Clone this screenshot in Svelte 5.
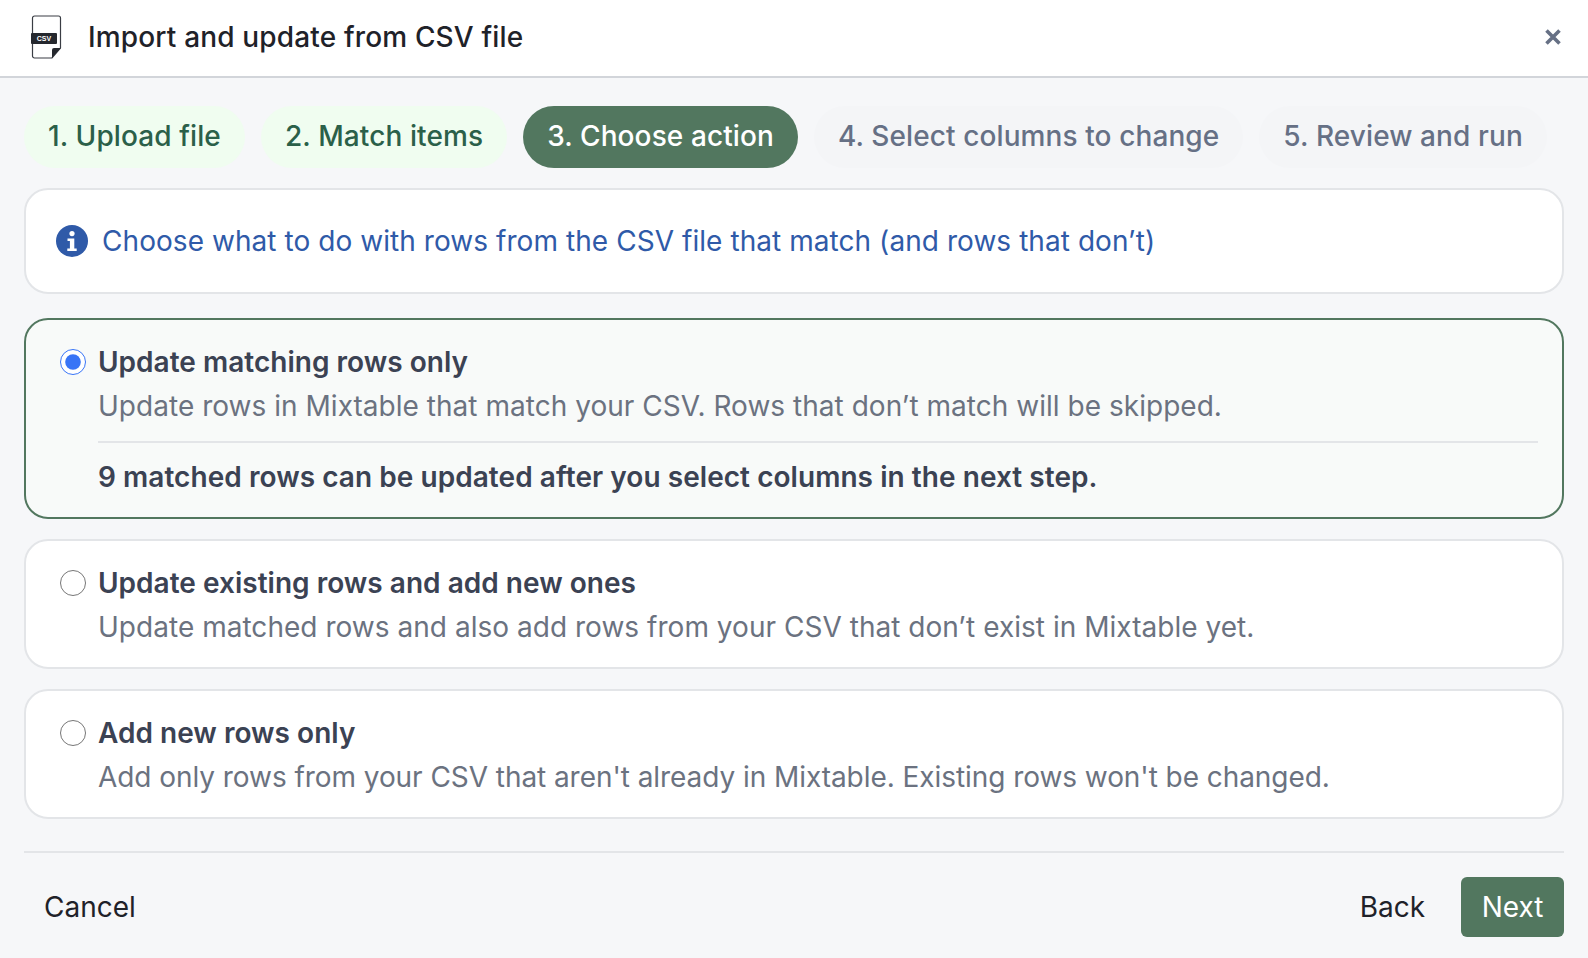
<script>
    const steps = [
        { label: "1. Upload file", state: "done" },
        { label: "2. Match items", state: "done" },
        { label: "3. Choose action", state: "active" },
        { label: "4. Select columns to change", state: "todo" },
        { label: "5. Review and run", state: "todo" }
    ];

    const options = [
        {
            title: "Update matching rows only",
            desc: "Update rows in Mixtable that match your CSV. Rows that don’t match will be skipped.",
            note: "9 matched rows can be updated after you select columns in the next step."
        },
        {
            title: "Update existing rows and add new ones",
            desc: "Update matched rows and also add rows from your CSV that don’t exist in Mixtable yet."
        },
        {
            title: "Add new rows only",
            desc: "Add only rows from your CSV that aren't already in Mixtable. Existing rows won't be changed."
        }
    ];

    let selected = 0;
</script>

<div class="dialog">
    <header class="top">
        <svg class="fileIcon" width="34" height="44" viewBox="0 0 34 44">
            <path d="M4.5 1h24a2 2 0 0 1 2 2V33L22 43H4.5a2 2 0 0 1-2-2V3a2 2 0 0 1 2-2z" fill="#fff" stroke="#3a3d44" stroke-width="1.2"/>
            <path d="M30.6 33L22 43V35a2 2 0 0 1 2-2z" fill="#25282e"/>
            <rect x="1" y="18" width="26" height="11" rx="1" fill="#25282e"/>
            <text x="14" y="26.2" class="csv">CSV</text>
        </svg>
        <h1>Import and update from CSV file</h1>
        <button class="close" aria-label="Close">
            <svg width="20" height="20" viewBox="0 0 20 20">
                <path d="M3.5 3.5l13 13M16.5 3.5l-13 13" stroke="#667085" stroke-width="3.6" fill="none"/>
            </svg>
        </button>
    </header>

    <main class="body">
        <nav class="steps">
            {#each steps as step}
                <span class="step {step.state}">{step.label}</span>
            {/each}
        </nav>

        <div class="info">
            <svg width="32" height="32" viewBox="0 0 32 32">
                <circle cx="16" cy="16" r="16" fill="#2f5aa8"/>
                <circle cx="16" cy="8.6" r="2.6" fill="#fff"/>
                <path d="M11.5 13.5h6.8v10h2.4v2.6h-9.4v-2.6h2.6v-7.4h-2.4z" fill="#fff"/>
            </svg>
            <span>Choose what to do with rows from the CSV file that match (and rows that don’t)</span>
        </div>

        <div class="options">
            {#each options as option, i}
                <label class="option" class:selected={selected === i}>
                    <input type="radio" name="action" value={i} bind:group={selected} />
                    <div class="optionText">
                        <div class="optionTitle">{option.title}</div>
                        <div class="optionDesc">{option.desc}</div>
                        {#if option.note}
                            <div class="optionNote">{option.note}</div>
                        {/if}
                    </div>
                </label>
            {/each}
        </div>

        <footer class="bottom">
            <button class="plain">Cancel</button>
            <div class="right">
                <button class="plain">Back</button>
                <button class="next">Next</button>
            </div>
        </footer>
    </main>
</div>

<style>
    :global(body) {
        margin: 0;
        background: #f6f7f9;
    }

    .dialog {
        height: 958px;
        display: flex;
        flex-direction: column;
        font-family: Inter, "Liberation Sans", sans-serif;
        color: #1f2229;
        overflow: hidden;
    }

    .top {
        height: 74px;
        flex: none;
        background: #fff;
        border-bottom: 2px solid #d2d5da;
        display: flex;
        align-items: center;
        padding: 0 25px 2px 30px;
    }

    .fileIcon {
        margin-right: 24px;
    }

    .csv {
        font-family: "Liberation Sans", sans-serif;
        font-size: 7px;
        font-weight: 700;
        fill: #fff;
        text-anchor: middle;
    }

    h1 {
        margin: 0;
        font-size: 28px;
        font-weight: 500;
        letter-spacing: 0.16px;
        flex: 1;
    }

    .close {
        border: none;
        background: none;
        padding: 0;
        height: 20px;
    }

    .body {
        flex: 1;
        padding: 28px 24px 0;
    }

    .steps {
        display: flex;
        gap: 16px;
        margin-bottom: 20px;
    }

    .step {
        height: 62px;
        padding: 0 24px 2px;
        box-sizing: border-box;
        border-radius: 31px;
        display: flex;
        align-items: center;
        font-size: 28px;
        font-weight: 500;
        letter-spacing: 0.1px;
    }

    .done {
        background: #f0fdf0;
        color: #2b6049;
    }

    .active {
        background: #52775f;
        color: #fff;
    }

    .todo {
        background: #f4f5f7;
        color: #667085;
    }

    .info {
        height: 102px;
        box-sizing: content-box;
        background: #fff;
        border: 2px solid #e3e5e8;
        border-radius: 24px;
        display: flex;
        align-items: center;
        gap: 14px;
        padding: 0 30px;
        font-size: 28px;
        letter-spacing: 0.06px;
        color: #2f5aa8;
        margin-bottom: 24px;
    }

    .options {
        display: flex;
        flex-direction: column;
        gap: 20px;
    }

    .option {
        display: flex;
        gap: 12px;
        padding: 24px 24px 22px 34px;
        background: #fff;
        border: 2px solid #e3e5e8;
        border-radius: 24px;
    }

    .option.selected {
        background: #f8faf9;
        border-color: #52775f;
    }

    input[type="radio"] {
        width: 26px;
        height: 26px;
        margin: 5px 0 0;
        flex: none;
        accent-color: #3874f6;
    }

    .optionText {
        flex: 1;
    }

    .optionTitle {
        font-size: 28px;
        line-height: 36px;
        font-weight: 600;
        letter-spacing: 0.02px;
        color: #3b4253;
    }

    .optionDesc {
        font-size: 28px;
        line-height: 36px;
        margin-top: 8px;
        letter-spacing: 0.03px;
        color: #6b7280;
    }

    .option:last-child .optionDesc {
        letter-spacing: -0.06px;
    }

    .optionNote {
        margin-top: 17px;
        padding-top: 16px;
        border-top: 2px solid #e3e5e8;
        font-size: 28px;
        line-height: 36px;
        font-weight: 600;
        letter-spacing: 0.05px;
        color: #3b4253;
    }

    .bottom {
        margin-top: 32px;
        border-top: 2px solid #e3e5e8;
        padding-top: 24px;
        display: flex;
        justify-content: space-between;
        align-items: center;
    }

    .right {
        display: flex;
        align-items: center;
    }

    button {
        font-family: inherit;
    }

    .plain {
        border: none;
        background: none;
        padding: 0 20px;
        height: 60px;
        font-size: 28px;
        color: #1f2229;
    }

    .next {
        border: none;
        height: 60px;
        padding: 0 20.5px;
        border-radius: 6px;
        background: #52775f;
        color: #fff;
        font-size: 28px;
        margin-left: 16px;
    }
</style>
